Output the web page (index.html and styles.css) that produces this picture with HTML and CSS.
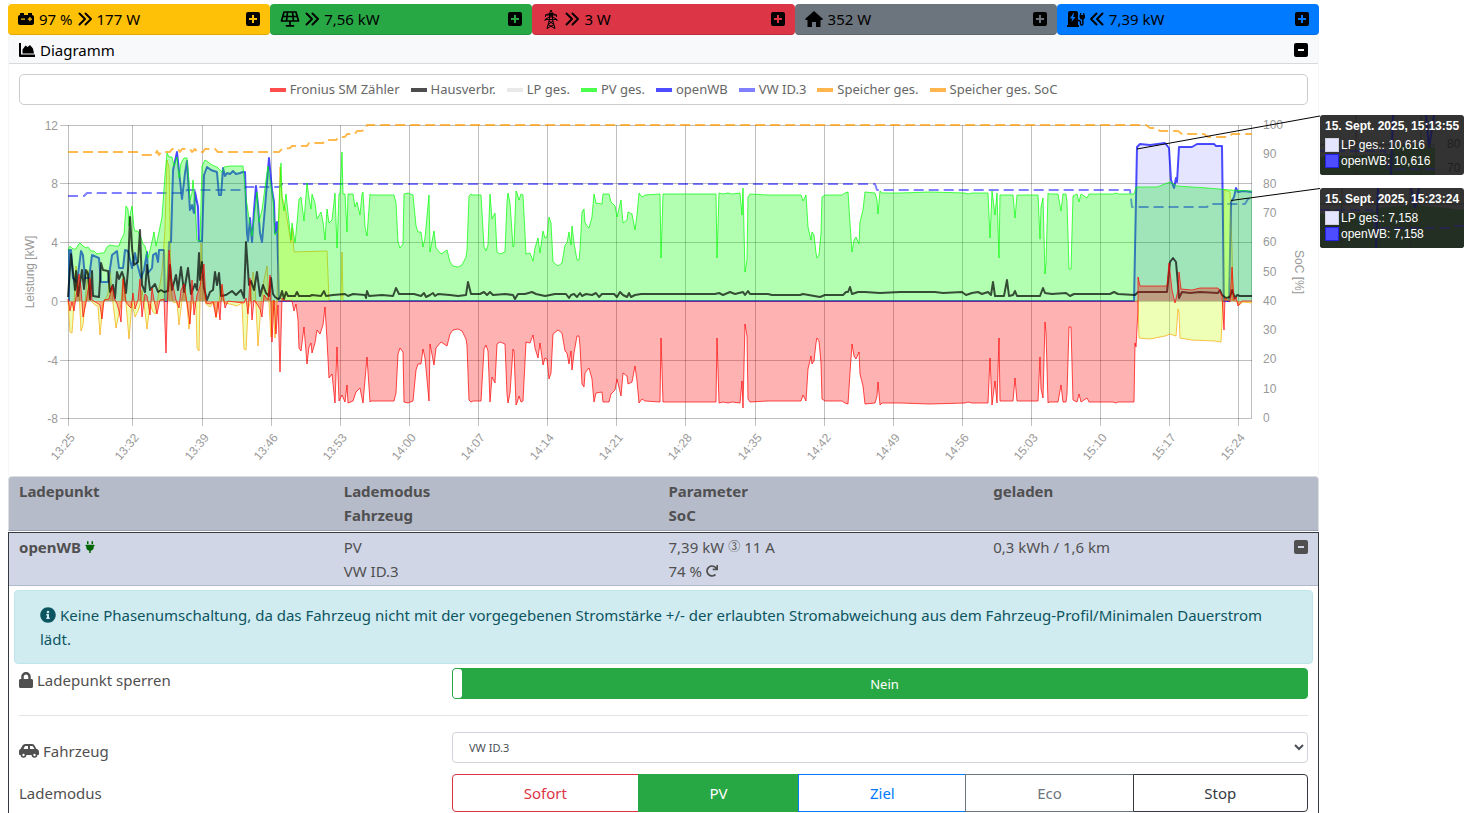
FILE: index.html
```html
<!DOCTYPE html>
<html lang="de">
<head>
<meta charset="utf-8">
<meta name="viewport" content="width=device-width, initial-scale=1">
<title>openWB</title>
<link rel="stylesheet" href="styles.css">
</head>
<body>
<svg class="sprite" aria-hidden="true">
  <symbol id="plus" viewBox="0 0 14 14"><path fill-rule="evenodd" d="M2 0h10a2 2 0 0 1 2 2v10a2 2 0 0 1-2 2H2a2 2 0 0 1-2-2V2a2 2 0 0 1 2-2zM6 3v3H3v2h3v3h2V8h3V6H8V3z"/></symbol>
  <symbol id="minus" viewBox="0 0 14 14"><path fill-rule="evenodd" d="M2 0h10a2 2 0 0 1 2 2v10a2 2 0 0 1-2 2H2a2 2 0 0 1-2-2V2a2 2 0 0 1 2-2zM4 6v2h6V6z"/></symbol>
  <symbol id="right" viewBox="0 0 14 14"><path d="M1.500 1.500L7 7l-5.500 5.500M7.500 1.500L13 7l-5.500 5.500" fill="none" stroke="currentColor" stroke-width="1.900" stroke-linecap="round" stroke-linejoin="round"/></symbol>
  <symbol id="left" viewBox="0 0 14 14"><path d="M6.500 1.500L1 7l5.500 5.500M12.500 1.500L7 7l5.500 5.500" fill="none" stroke="currentColor" stroke-width="1.900" stroke-linecap="round" stroke-linejoin="round"/></symbol>
</svg>
<main class="page">
  <div class="badges">
    <section class="badge yellow">
      <svg class="ic w16" viewBox="0 0 16 14"><path fill-rule="evenodd" d="M2 1h4v2h4V1h4v2a2 2 0 0 1 2 2v6a2 2 0 0 1-2 2H2a2 2 0 0 1-2-2V5a2 2 0 0 1 2-2zM3 6.500v1.200h4V6.500zM11.300 5v1.500H9.800v1.200h1.500v1.500h1.200V7.700H14V6.500h-1.500V5z"/></svg>
      <span>97 %</span><svg class="ic w14"><use href="#right"/></svg><span>177 W</span>
      <button class="toggle" aria-label="Speicher aufklappen"><svg class="ic w14"><use href="#plus"/></svg></button>
    </section>
    <section class="badge green">
      <svg class="ic w20" viewBox="0 0 20 16"><path d="M4 1h12l2.500 9h-17zM2.700 5.500h14.600M7.500 1l-1 9M12.500 1l1 9M10 10v4M6.500 14.800h7" fill="none" stroke="currentColor" stroke-width="1.700" stroke-linejoin="round" stroke-linecap="round"/></svg>
      <svg class="ic w14"><use href="#right"/></svg><span>7,56 kW</span>
      <button class="toggle" aria-label="PV aufklappen"><svg class="ic w14"><use href="#plus"/></svg></button>
    </section>
    <section class="badge red">
      <svg class="ic pylon" viewBox="0 0 18 20"><path d="M9 1L7.500 4.500v6L5 19.500M9 1l1.500 3.500v6L13 19.500M3.500 8V6L7.500 4.500h3l4 1.500V8M3.500 6h11M3 12V10.500L7.500 8h3l4.500 2.500V12M3 10.500h12M7.500 4.500l3 3.500M10.500 4.500l-3 3.500M7 12l5 3.500M11 12l-5 3.500M6 15.500l7 4M12 15.500l-7 4" fill="none" stroke="currentColor"/></svg>
      <svg class="ic w14"><use href="#right"/></svg><span>3 W</span>
      <button class="toggle" aria-label="Netz aufklappen"><svg class="ic w14"><use href="#plus"/></svg></button>
    </section>
    <section class="badge gray">
      <svg class="ic w18" viewBox="0 0 18 16"><path d="M9 0l9 8-1 1h-1.500v7H11v-5H7v5H2.500V9H1L0 8z"/></svg>
      <span>352 W</span>
      <button class="toggle" aria-label="Haus aufklappen"><svg class="ic w14"><use href="#plus"/></svg></button>
    </section>
    <section class="badge blue">
      <svg class="ic w18" viewBox="0 0 18 16"><path fill-rule="evenodd" d="M1 2a2 2 0 0 1 2-2h6a2 2 0 0 1 2 2v12h1v2H0v-2h1zM6.500 2L3 7.500h2.300L4.500 11 8.500 6H6.200L7 2z"/><path d="M11 9.500h1q1.500 0 1.500 2v1q0 1.500 1.200 1.500t1.200-1.500V8" fill="none" stroke="currentColor" stroke-width="1.400"/><path d="M13 2h1.200v2h2V2h1.200v2h.6v2q0 2-2 2.800h-1Q12.500 8 12.500 6V4h.5z"/></svg>
      <svg class="ic w14"><use href="#left"/></svg><span>7,39 kW</span>
      <button class="toggle" aria-label="Ladepunkte aufklappen"><svg class="ic w14"><use href="#plus"/></svg></button>
    </section>
  </div>

  <section class="chart-card">
    <header class="chart-head">
      <svg class="ic w16" viewBox="0 0 16 14"><path d="M0 0h2v11.500h14V14H1a1 1 0 0 1-1-1z"/><path d="M3.500 10.500V6.500L6.500 2.500l2 1.500L11 2l3 3.500 1 5z"/></svg>
      <span>Diagramm</span>
      <button class="toggle" aria-label="Diagramm zuklappen"><svg class="ic w14"><use href="#minus"/></svg></button>
    </header>
    <ul class="legend">
      <li class="l-red">Fronius SM Zähler</li>
      <li class="l-black">Hausverbr.</li>
      <li class="l-light">LP ges.</li>
      <li class="l-green">PV ges.</li>
      <li class="l-blue">openWB</li>
      <li class="l-lilac">VW ID.3</li>
      <li class="l-orange">Speicher ges.</li>
      <li class="l-orange">Speicher ges. SoC</li>
    </ul>
    <div class="plot">
      <svg id="chart" class="chart" viewBox="9 105 1309 371" role="img" aria-label="Leistung und SoC im Zeitverlauf">
        <g id="axes"></g>
        <g id="series"></g>
        <path class="leader" d="M1137 149L1320 116M1231 200.500L1320 188.500"/>
      </svg>
      <aside class="tip tip-a">
        <svg class="tip-bg" viewBox="0 0 144 60" aria-hidden="true"><path fill="#242f24" d="M0 42L72 39V30L115 32V60H0z"/><path class="tip-line" d="M71 60L73 0M106 0l3 33 5-33"/><path class="tip-dash" d="M0 36h65l3 18h47"/><path class="tip-grid" d="M36 0v60M101 0v60M0 30h115"/><text x="127" y="33">80</text><text x="127" y="57">70</text></svg>
        <strong>15. Sept. 2025, 15:13:55</strong>
        <span class="t-light">LP ges.: 10,616</span>
        <span class="t-blue">openWB: 10,616</span>
      </aside>
      <aside class="tip tip-b">
        <svg class="tip-bg" viewBox="0 0 144 60" aria-hidden="true"><path fill="#242f24" d="M0 26L57 24V20L95 17 144 22V60H0z"/><path class="tip-line" d="M56 60L58 0M91 0l4 20 4-20"/><path class="tip-dash" d="M0 22h52l3 18h75l3-2h11"/><path class="tip-grid" d="M22 0v60M90 0v60M0 16h144"/></svg>
        <strong>15. Sept. 2025, 15:23:24</strong>
        <span class="t-light">LP ges.: 7,158</span>
        <span class="t-blue">openWB: 7,158</span>
      </aside>
    </div>
  </section>

  <section class="cp-head cols">
    <div>Ladepunkt</div>
    <div>Lademodus<br>Fahrzeug</div>
    <div>Parameter<br>SoC</div>
    <div>geladen</div>
  </section>

  <section class="cp">
    <header class="cp-title cols">
      <div class="line"><b>openWB</b><svg class="ic plug" viewBox="0 0 384 512"><path d="M320,32a32,32,0,0,0-64,0v96h64Zm48,128H16A16,16,0,0,0,0,176v32a16,16,0,0,0,16,16H32v32A160.070,160.070,0,0,0,160,412.800V512h64V412.800A160.070,160.070,0,0,0,352,256V224h16a16,16,0,0,0,16-16V176A16,16,0,0,0,368,160ZM128,32a32,32,0,0,0-64,0v96h64Z"/></svg></div>
      <div>PV<br>VW ID.3</div>
      <div>
        <div class="line">7,39 kW <span class="phase">③</span> 11 A</div>
        <div class="line">74 %<svg class="ic w12" viewBox="0 0 512 512"><path d="M500.330 0h-47.410a12 12 0 0 0-12 12.570l4 82.760A247.420 247.420 0 0 0 256 8C119.340 8 7.900 119.530 8 256.190 8.100 393.070 119.100 504 256 504a247.100 247.100 0 0 0 166.180-63.910 12 12 0 0 0 .48-17.430l-34-34a12 12 0 0 0-16.380-.55A176 176 0 1 1 402.100 157.800l-101.530-4.870a12 12 0 0 0-12.570 12v47.410a12 12 0 0 0 12 12h200.330a12 12 0 0 0 12-12V12a12 12 0 0 0-12-12z"/></svg></div>
      </div>
      <div class="line">0,3 kWh / 1,6 km<button class="toggle" aria-label="Ladepunkt zuklappen"><svg class="ic w14"><use href="#minus"/></svg></button></div>
    </header>
    <p class="alert"><svg class="ic w16" viewBox="0 0 512 512"><path d="M256 8C119.043 8 8 119.083 8 256c0 136.997 111.043 248 248 248s248-111.003 248-248C504 119.083 392.957 8 256 8zm0 110c23.196 0 42 18.804 42 42s-18.804 42-42 42-42-18.804-42-42 18.804-42 42-42zm56 254c0 6.627-5.373 12-12 12h-88c-6.627 0-12-5.373-12-12v-24c0-6.627 5.373-12 12-12h12v-64h-12c-6.627 0-12-5.373-12-12v-24c0-6.627 5.373-12 12-12h64c6.627 0 12 5.373 12 12v100h12c6.627 0 12 5.373 12 12v24z"/></svg> Keine Phasenumschaltung, da das Fahrzeug nicht mit der vorgegebenen Stromstärke +/- der erlaubten Stromabweichung aus dem Fahrzeug-Profil/Minimalen Dauerstrom lädt.</p>
    <div class="row lock-row">
      <label class="line" for="lock"><svg class="ic w14 lock" viewBox="0 0 448 512"><path d="M400 224h-24v-72C376 68.200 307.800 0 224 0S72 68.200 72 152v72H48c-26.500 0-48 21.500-48 48v192c0 26.500 21.500 48 48 48h352c26.500 0 48-21.500 48-48V272c0-26.500-21.500-48-48-48zm-104 0H152v-72c0-39.700 32.300-72 72-72s72 32.300 72 72v72z"/></svg>Ladepunkt sperren</label>
      <button class="switch" id="lock" role="switch" aria-checked="false"><i></i><span>Nein</span></button>
    </div>
    <hr>
    <div class="row">
      <label class="line pad" for="car"><svg class="ic w20" viewBox="0 0 20 16"><path fill-rule="evenodd" d="M6 1h7q1.500 0 2.300 1.300L17.500 6H18q2 .5 2 3v2q0 1-1 1h-.6a3 3 0 0 1-5.800 0H7.400a3 3 0 0 1-5.800 0H1q-1 0-1-1V8q0-1.700 1.500-2L3.500 2.500Q4.300 1 6 1zM6 3L4.500 6H9V3zM11 3v3h4.500l-2-3z"/><circle cx="4.500" cy="12" r="2.800"/><circle cx="15.500" cy="12" r="2.800"/><g fill="#fff"><circle cx="4.500" cy="12" r="1.200"/><circle cx="15.500" cy="12" r="1.200"/></g></svg>Fahrzeug</label>
      <select class="select" id="car"><option>VW ID.3</option></select>
    </div>
    <div class="row mode-row">
      <span class="pad" id="mode">Lademodus</span>
      <div class="modes" role="group" aria-labelledby="mode">
        <button class="m-red">Sofort</button><button class="m-green" aria-pressed="true">PV</button><button class="m-blue">Ziel</button><button class="m-gray">Eco</button><button class="m-dark">Stop</button>
      </div>
    </div>
  </section>
</main>
<script src="chart.js"></script>
</body>
</html>
```
FILE: styles.css
```css
* { box-sizing: border-box; }
body { margin: 0; padding: 4px 153px 0 8px; background: #fff; color: #505050; font-family: "Noto Sans", "Noto Sans CJK SC", sans-serif; font-size: 15px; line-height: 24px; }
button { font: inherit; color: inherit; cursor: pointer; }
.sprite { position: absolute; width: 0; height: 0; }
.ic { fill: currentColor; flex: none; height: 16px; }
.w12 { width: 12px; height: 12px; }
.w14 { width: 14px; height: 14px; }
.w16 { width: 16px; }
.w18 { width: 18px; }
.w20 { width: 20px; }
.pylon { width: 18px; height: 20px; }
.plug { width: 10px; height: 12px; color: #006400; }
.line { display: flex; align-items: center; gap: 4px; }
.toggle { display: flex; margin-left: auto; padding: 0; border: 0; background: none; }

.badges { display: grid; grid-template-columns: repeat(5, 1fr); color: #000; }
.badge { display: flex; align-items: center; gap: 5px; height: 31px; padding: 0 10px; border-radius: 4px; border-bottom: 1px solid rgba(0, 0, 0, .13); }
.yellow { background: #ffc107; }
.green { background: #28a745; }
.red { background: #dc3545; }
.gray { background: #6c757d; }
.blue { background: #007bff; }

.chart-card { border: 1px solid #f6f6f8; border-top: 0; border-bottom: 0; }
.chart-head { display: flex; align-items: center; gap: 5px; height: 29px; padding: 1px 10px 0; color: #000; background: #f8f9fb; border-bottom: 1px solid #d9dadc; }
.legend { display: flex; flex-wrap: wrap; justify-content: center; gap: 0 11px; margin: 10px 10px 0; padding: 4px 0; border: 1px solid #ccc; border-radius: 5px; list-style: none; font-size: 13px; line-height: 21px; color: #666; }
.legend li { display: flex; align-items: center; gap: 4px; }
.legend li::before { content: ""; width: 16px; height: 4px; background: currentColor; }
.l-red::before { color: #ff4d4d; }
.l-black::before { color: #4d4d4d; }
.l-light::before { color: #e9e9e9; }
.l-green::before { color: #4dff4d; }
.l-blue::before { color: #4d4dff; }
.l-lilac::before { color: #8080ff; }
.l-orange::before { color: #ffb54d; }

.plot { position: relative; }
.chart { display: block; width: 100%; height: auto; overflow: visible; }
.chart text, .tip-bg text { font-family: "Liberation Sans", Arial, sans-serif; font-size: 12px; fill: #999; }
.grid { stroke: #000; stroke-opacity: .25; fill: none; }
.area { stroke: none; }
.curve { fill: none; stroke-linejoin: round; }
.leader { stroke: #000; fill: none; }
.tip { position: absolute; left: calc(100% + 2px); display: flex; flex-direction: column; width: 144px; height: 60px; padding: 4px 5px; overflow: hidden; border-radius: 3px; background: #333; color: #fff; font: 12px/16px "Liberation Sans", Arial, sans-serif; white-space: nowrap; }
.tip-a { top: 10px; }
.tip-b { top: 83px; }
.tip > strong { position: relative; margin-bottom: 3px; line-height: 15px; }
.tip > span { position: relative; display: flex; align-items: center; gap: 2px; }
.tip > span::before { content: ""; width: 12px; height: 12px; border: 1px solid #d0d0dd; background: #e5e5ff; }
.tip > .t-blue::before { border-color: #2222e0; background: #4d4dff; }
.tip-bg { position: absolute; inset: 0; width: 100%; height: 100%; }
.tip-bg text { fill: #1f1f1f; }
.tip-line, .tip-dash { fill: none; stroke: #1a1a4d; stroke-width: 2; }
.tip-dash { stroke: #26264a; stroke-dasharray: 10 5; }
.tip-grid { fill: none; stroke: #262626; }

.cols { display: grid; grid-template-columns: repeat(4, 1fr); padding: 2px 0 2px 10px; }
.cp-head { border: 1px solid #dcdee2; border-bottom-color: #9ba1b3; border-radius: 4px 4px 0 0; background: #b6bbca; font-weight: 700; margin-bottom: 1px; padding-bottom: 3px; }
.cp { border: 1px solid #343a40; border-bottom: 0; padding-bottom: 2px; }
.cp-title { background: #d0d6e6; border-bottom: 1px solid #b2b9cd; align-items: start; }
.cp-title .toggle { margin-right: 10px; }
.phase { font-size: 12px; }
.alert { margin: 4px 5px; padding: 12px 25px; border: 1px solid #bee5eb; border-radius: 4px; background: #d1ecf1; color: #0c5460; }
.alert .ic { vertical-align: -2px; }
.row { display: grid; grid-template-columns: 1fr 2fr; padding-left: 10px; align-items: start; }
.row > :last-child { margin-right: 10px; }
.pad { padding-top: 7px; }
.lock { height: 16px; }
.switch { display: flex; height: 31px; padding: 0; border: 1px solid #28a745; border-radius: 4px; background: #28a745; color: #fff; font-size: 13px; }
.switch i { width: 9px; height: 29px; border-radius: 3px; background: #fff; }
.switch span { flex: 1; align-self: center; text-align: center; }
hr { height: 1px; margin: 16px 10px; border: 0; background: #e3e3e3; }
.select { height: 31px; padding: 0 0 0 12px; border: 1px solid #ced4da; border-radius: 4px; background: #fff; color: #495057; font: inherit; font-size: 11px; }
.mode-row { margin-top: 11px; }
.modes { display: flex; }
.modes button { flex: 1 1 auto; height: 38px; padding: 0 12px; border: 1px solid; background: #fff; margin-left: -1px; }
.modes button:first-child { margin-left: 0; border-radius: 4px 0 0 4px; }
.modes button:last-child { border-radius: 0 4px 4px 0; }
.modes .m-red { color: #dc3545; }
.modes .m-green { color: #fff; background: #28a745; border-color: #28a745; }
.modes .m-blue { color: #007bff; }
.modes .m-gray { color: #6c757d; }
.modes .m-dark { color: #343a40; }
```
FILE: chart.js
```js
// Series as "x,y" pairs in chart coordinates; the zero line lies at y = 301.
const ZERO = 301;
const parse = s => s.trim().split(/\s+/).map(p => p.split(',').map(Number));

const pv = parse(`68,250 70,246 73,249 76,249 78,245 80,243 83,246 86,248 88,247 91,251 94,251 97,254 101,253 104,253 107,247 110,245 115,246 119,246 121,240 124,234 126,206 128,209 129,226 130,215 132,206 134,228 135,231 138,231 141,238 143,244 145,246 148,258 151,246 154,232 156,246 159,232 162,217 165,175 167,153 169,157 172,157 174,166 177,157 179,178 181,163 184,158 187,158 189,181 190,200 192,193 193,180 195,203 197,240 200,241 202,166 205,160 208,162 212,165 217,167 222,172 224,167 230,166 243,166 246,198 249,218 252,236 255,210 257,192 259,222 262,210 266,180 268,166 270,180 273,198 275,235 278,230
281,163 282,197 284,211 286,194 288,213 291,240 292,223 295,243 297,223 299,199 301,197 304,221 307,183 309,198 311,209 312,194 315,203 317,219 321,212 323,222 325,240 327,209 329,223 332,220 335,193 337,248 339,194 340,194 342,152 343,194 345,194 347,232 348,194 353,194 355,207 357,202 360,215 362,194 363,192 365,227 367,236
370,194 371,195 394,195 396,203 398,242 400,248 403,244 404,194 408,193 413,195 416,226 418,232 421,232 423,247 425,238 429,195 430,252 434,231 436,248 441,254 447,250 450,262 453,266 458,267 462,265 466,257 467,250 469,196 471,194 473,195 481,195 484,247 486,251 488,245 490,194 492,219 495,213 497,252 500,254 505,252 507,202 508,193 510,203 513,247 514,245 516,191 517,193 519,200 521,194 523,195 526,254 530,253 533,261 535,248 538,238 540,253 543,231 545,238 547,237 549,217 551,223 553,262 558,266 562,263 565,245 567,243 569,232 571,245 572,226 574,243 577,260 579,260 580,250 582,212 584,209 585,223 588,227
589,228 592,217 594,194 596,203 602,204 603,194 609,194 611,202 615,206 617,217 621,200 623,223 627,220 628,212 632,214 635,230 637,215 639,193 642,197 645,195 660,194 661,258 663,194 716,194 717,258 719,193 723,194 728,193 732,194 740,193 742,215 743,188 745,272 747,260 748,197 750,194 768,195 801,195 803,201 806,195 808,227 811,240 812,232 814,235 816,253 817,258 819,255 821,233 822,197 825,195 842,195 845,193 848,192 850,223 852,252 854,240 856,237 859,244 860,222 863,210 865,192 875,193 877,200 878,214 880,191
882,193 900,193 930,192 965,193 968,194 972,193 988,193 990,238 992,191 995,215 997,193 999,258 1000,195 1013,195 1015,218 1017,195 1038,195 1040,239 1041,207 1043,198 1045,274 1046,263 1048,193 1049,194 1058,194 1061,211 1063,194 1066,194 1067,202 1069,269 1071,269 1073,196 1077,194 1079,202 1081,194 1087,198 1089,194 1113,194 1116,193 1118,194 1134,194 1136,187 1157,187 1170,182 1177,186 1207,188 1230,190 1252,191`);

const wb = parse(`69,301 69,250 71,250 73,278 77,282 81,251 83,255 85,278 89,278 92,255 99,258 101,282 108,282 112,255 117,251 119,268 123,268 125,250 128,251 132,268 135,253 137,263 141,278 144,270 147,252 148,273 152,268 153,255 156,253 158,262 159,250 164,250 165,301 167,301 169,242 171,242 173,170 177,152 180,180 182,199 185,173 187,161 190,210 192,205 194,213 195,192 198,207 199,241 202,241 204,175 207,167 211,170 217,172 219,195 221,195 223,168 225,176 227,173 230,174 233,171 236,174 240,173 243,172 245,172 247,233 248,241 250,218 252,242 254,210 256,186 258,205 260,233 262,242 265,207 267,182 269,158 272,190 274,202 275,233 277,222 278,260 279,301 1134,301 1137,147 1140,144 1150,145 1165,143 1169,148 1171,180 1174,188 1176,178 1177,182 1179,147 1192,147 1197,144 1214,144 1216,146 1222,146 1224,301 1229,301 1231,202 1234,197 1236,188 1238,192 1243,191 1252,192`);

// Surplus after the morning phase is exported, so the meter mirrors PV.
const exported = pv.filter(p => p[0] >= 370 && p[0] < 1134).map(([x, y]) => [x, 596 - y]);
const grid = parse(`68,299 70,311 72,302 74,311 77,290 79,274 81,288 83,317 86,303 88,290 90,278 92,300 97,303 100,305 102,319 104,300 109,299 112,286 115,300 117,304 119,311 121,322 123,279 126,302 129,306 131,308 133,293 135,309 138,300 140,279 142,317 145,294 147,296 150,315 152,288 154,300 157,314 160,300 164,299 166,353 169,250 172,283 174,290 176,300 179,308 181,290 184,284 187,303 190,324 192,280 194,315 197,295 200,286 202,275 204,264 206,303 210,304 213,302 216,317 218,302 220,320 222,284 225,308 228,301 235,302 244,303 246,298 248,314 250,278 252,320 254,300 257,304 260,309 262,317 264,295 268,300 270,275 272,342 274,300 276,334 278,305 280,372 282,298 285,301 292,301 294,311 296,304 298,320 299,348 301,351 304,327 307,364 309,347 311,343 312,353 315,343 317,330 320,334 323,325 325,307 327,340 329,378 332,374 335,403 337,347 339,401 342,395 345,402 347,385 348,403 353,401 356,392 360,388 363,403 367,357`)
  .concat(exported)
  .concat(parse(`1134,402 1135,343 1136,347 1138,310 1138,277 1140,286 1150,286 1167,286 1169,263 1172,290 1175,303 1178,290 1179,272 1181,289 1192,290 1200,288 1218,288 1222,295 1224,330 1225,298 1230,302 1232,267 1234,300 1236,297 1238,306 1242,301 1252,301`));

const battery = parse(`68,299 70,332 72,333 74,303 76,266 79,290 81,331 83,325 85,303 88,270 90,300 95,305 98,306 100,335 103,304 108,294 110,270 113,303 116,328 118,318 121,304 123,277 126,303 129,339 132,303 135,317 138,311 140,305 142,290 144,303 147,329 150,304 153,312 156,314 159,290 162,272 165,230 167,160 169,167 171,290 173,302 177,303 179,325 182,300 185,288 187,305 189,329 192,302 196,305 197,348 199,351 201,243 203,290 206,304 210,307 214,302 216,318 219,302 221,286 224,303 230,304 237,306 242,303 244,349 246,350 248,310 250,303 253,272 255,286 258,346 261,304 264,280 267,266 269,303 271,337 273,300 275,338 277,300 280,167 282,197 285,207 288,225 291,243 292,228 294,252 327,251 329,301 341,301 342,252 343,301 1138,301 1139,338 1150,339 1165,336 1170,334 1176,336 1178,309 1179,312 1180,338 1192,340 1215,341 1221,342 1223,301 1224,190 1230,192 1232,250 1233,301 1236,301 1239,305 1243,302 1252,303`);

const house = parse(`68,297 71,254 75,290 76,271 78,296 82,270 84,289 86,270 88,274 90,299 92,271 93,296 99,297 101,263 103,270 108,271 110,292 113,285 115,298 117,272 119,279 122,272 124,278 126,293 128,270 130,217 132,248 134,265 138,262 140,230 142,285 145,292 147,265 150,290 155,284 158,292 161,290 164,292 168,291 170,265 172,290 176,275 178,290 181,267 184,292 188,268 191,294 195,284 197,290 199,253 200,280 202,262 204,288 207,300 210,292 213,290 215,272 217,285 219,273 221,296 226,295 232,291 236,295 241,290 244,298 246,242 249,285 251,281 254,290 257,272 260,296 263,285 266,293 269,296 271,278 273,294 275,297 278,299 280,298 282,291 284,299 286,292 288,296 295,296 297,292 299,296 310,296 312,295 321,296 324,291 326,296 333,295 345,294 348,296 353,294 365,295 366,298 367,291 369,296 382,295 393,296 396,288 399,294 410,294 414,294 421,296 424,293 426,297 430,295 433,293 435,296 438,294 450,295 458,296 466,295 468,282 471,294 480,294 484,292 487,295 490,292 493,295 505,294 513,295 515,299 518,294 525,294 532,292 536,294 545,296 555,294 566,294 569,298 571,295 574,294 577,297 580,293 582,296 586,294 592,295 596,293 599,297 602,294 614,294 617,297 620,292 623,295 627,297 629,293 631,297 635,295 641,294 660,294 715,294 719,293 723,295 730,292 735,294 743,292 745,295 748,291 750,294 768,294 772,295 800,295 803,294 820,297 825,295 843,295 846,292 848,292 850,287 852,294 858,292 865,292 880,293 900,292 935,292 943,293 962,292 966,295 972,293 978,292 982,294 988,292 991,295 993,282 995,296 1004,296 1007,280 1009,296 1013,295 1015,291 1017,296 1040,296 1043,288 1045,293 1052,294 1066,293 1070,296 1074,294 1090,294 1110,294 1114,292 1118,294 1135,295 1138,292 1167,292 1170,262 1173,258 1176,262 1178,285 1179,298 1182,292 1190,293 1200,292 1218,293 1220,290 1222,295 1226,298 1230,297 1232,290 1235,298 1237,295 1240,296 1252,296`);

const soc = parse(`68,152 138,152 141,155 155,155 157,151 159,155 161,152 170,152 172,149 178,149 180,152 182,149 190,149 192,152 195,149 197,152 203,152 205,149 215,149 218,152 279,152 282,149 290,148 292,146 307,146 309,143 323,143 326,140 336,140 339,137 345,137 347,134 355,134 357,131 361,131 365,130 367,125 1146,125 1150,128 1156,128 1160,131 1178,131 1182,134 1204,134 1208,137 1228,137 1232,134 1252,134`);
const car = parse(`68,196 84,196 87,193 184,193 187,190 243,190 246,187 279,187 282,184 875,184 877,190 1130,190 1132,207 1207,207 1210,204 1245,204 1248,199 1252,199`);

const NS = 'http://www.w3.org/2000/svg';
const add = (parent, name, attrs, text) => {
  const el = document.createElementNS(NS, name);
  for (const key in attrs) el.setAttribute(key, attrs[key]);
  if (text) el.textContent = text;
  parent.appendChild(el);
};
const series = document.getElementById('series');
const toPoints = data => data.map(p => p.join(',')).join(' ');
const area = (data, fill) =>
  add(series, 'polygon', { class: 'area', fill, points: `${data[0][0]},${ZERO} ${toPoints(data)} 1252,${ZERO}` });
const line = (data, stroke, width = 1, dash = 'none') =>
  add(series, 'polyline', { class: 'curve', points: toPoints(data), stroke, 'stroke-width': width, 'stroke-dasharray': dash });

line(soc, 'rgba(255,155,0,.7)', 2, '10 5');
line(car, 'rgba(0,0,255,.5)', 2, '10 5');
line(battery, 'rgba(255,155,0,.7)');
line(wb, 'rgba(0,0,255,.7)', 2);
area(pv, 'rgba(0,255,0,.3)');
area(battery, 'rgba(200,255,13,.3)');
area(wb, 'rgba(0,0,255,.1)');
line(pv, 'rgba(0,255,0,.7)');
line(house, 'rgba(0,0,0,.7)', 2);
area(grid, 'rgba(255,0,0,.3)');
line(grid, 'rgba(255,0,0,.7)');

const axes = document.getElementById('axes');
const ticks = [68.5, 132.5, 202.5, 271.5, 340.5, 409.5, 478.5, 547.5, 616.5, 685.5, 755.5, 824.5, 893.5, 962.5, 1031.5, 1100.5, 1169.5, 1238.5];
const times = ['13:25', '13:32', '13:39', '13:46', '13:53', '14:00', '14:07', '14:14', '14:21', '14:28', '14:35', '14:42', '14:49', '14:56', '15:03', '15:10', '15:17', '15:24'];
ticks.forEach((x, i) => {
  add(axes, 'path', { class: 'grid', d: `M${x} 125V426` });
  add(axes, 'text', { 'text-anchor': 'end', transform: `translate(${x + 7} 438) rotate(-50)` }, times[i]);
});
[[12, 125.5], [8, 183.5], [4, 242.5], [0, 301.5], [-4, 360.5], [-8, 418.5]].forEach(([v, y]) => {
  add(axes, 'path', { class: 'grid', d: `M60 ${y}H1252` });
  add(axes, 'text', { x: 58, y: y + 4, 'text-anchor': 'end' }, String(v));
});
add(axes, 'path', { class: 'grid', d: 'M1251.500 125V418' });
for (let v = 0; v <= 100; v += 10) add(axes, 'text', { x: 1263, y: 422 - v * 2.93 }, String(v));
add(axes, 'text', { 'text-anchor': 'middle', transform: 'translate(34 272) rotate(-90)' }, 'Leistung [kW]');
add(axes, 'text', { 'text-anchor': 'middle', transform: 'translate(1295 272) rotate(90)' }, 'SoC [%]');
```
